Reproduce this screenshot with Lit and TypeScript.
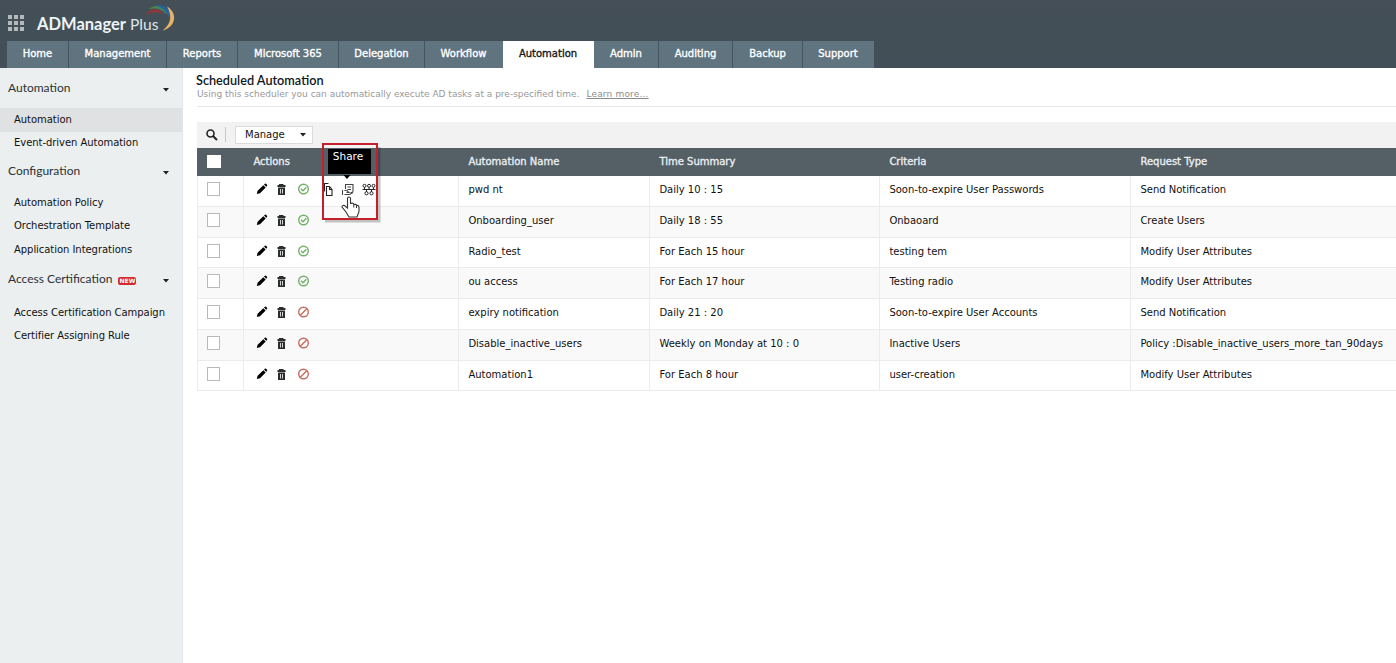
import { LitElement, html, css, svg } from "lit";
import { customElement } from "lit/decorators.js";
import { classMap } from "lit/directives/class-map.js";

const TABS: [string, number][] = [
  ["Home", 62], ["Management", 98], ["Reports", 71], ["Microsoft 365", 101],
  ["Delegation", 86], ["Workflow", 78], ["Automation", 91], ["Admin", 65],
  ["Auditing", 74], ["Backup", 70], ["Support", 71],
];

const ROWS: [boolean, string, string, string, string][] = [
  [true, "pwd nt", "Daily 10 : 15", "Soon-to-expire User Passwords", "Send Notification"],
  [true, "Onboarding_user", "Daily 18 : 55", "Onbaoard", "Create Users"],
  [true, "Radio_test", "For Each 15 hour", "testing tem", "Modify User Attributes"],
  [true, "ou access", "For Each 17 hour", "Testing radio", "Modify User Attributes"],
  [false, "expiry notification", "Daily 21 : 20", "Soon-to-expire User Accounts", "Send Notification"],
  [false, "Disable_inactive_users", "Weekly on Monday at 10 : 0", "Inactive Users", "Policy :Disable_inactive_users_more_tan_90days"],
  [false, "Automation1", "For Each 8 hour", "user-creation", "Modify User Attributes"],
];

const pencil = html`<svg class="i pencil" width="12" height="12" viewBox="0 0 12 12"><path d="M.8 11l.8-3.200L7.300 2.200l2.400 2.400L4 10.300zM8 1.600l.9-.8q.6-.5 1.200 0l.9.900q.5.600 0 1.200l-.8.8z" fill="#000"/></svg>`;
const trash = html`<svg class="i trash" width="9" height="11" viewBox="0 0 9 11"><path d="M2 0h4.500v1h2v2H.5V1H2zM1 3.500h7V11H1z" fill="#2b2d2f"/><path d="M3.500 5v4.500M5.500 5v4.500" stroke="#fff" stroke-width=".8"/></svg>`;
const okIcon = html`<svg class="i" width="12" height="12" viewBox="0 0 12 12" fill="none" stroke="#74b068" stroke-width="1.400"><circle cx="6.500" cy="6" r="4.800"/><path d="M4 5.700l2 2 3.300-3.500"/></svg>`;
const offIcon = html`<svg class="i" width="12" height="12" viewBox="0 0 12 12" fill="none" stroke="#c66d60" stroke-width="1.400"><circle cx="6.500" cy="6" r="4.800"/><path d="M3.300 9.200l6.500-6.500"/></svg>`;
const caret = html`<svg class="caret" width="6" height="4" viewBox="0 0 6 4"><path d="M0 0h6L3 3.500z" fill="#222"/></svg>`;

@customElement("app-header")
export class AppHeader extends LitElement {
  static styles = css`
    :host { display: flex; flex-direction: column; height: 68px; background: linear-gradient(#444f57, #424f58); }
    .brand { height: 41px; display: flex; padding-left: 8px; box-sizing: border-box; }
    .grid { margin: 15px 12px 0 0; flex: none; }
    .logo { font: 400 15.600px/22px Lato, sans-serif; color: #dfe5e9; margin-top: 13px; white-space: nowrap; width: 107px; }
    .logo b { font-size: 16.500px; font-weight: 700; color: #eef3f6; }
    .arc { flex: none; margin-top: 3px; }
    nav { display: flex; height: 27px; margin-left: 7px; }
    .tab { box-sizing: border-box; text-align: center; background: #607480; border-right: 1px solid #46545e; color: #fff; font: 10px/25px "DejaVu Sans", sans-serif; -webkit-text-stroke: .35px currentColor; white-space: nowrap; }
    .tab:last-child, .before { border-right-color: #607480; }
    .tab.on { background: #fff; color: #161616; border-color: #fff; }
  `;
  render() {
    return html`
      <div class="brand">
        <svg class="grid" width="17" height="17" viewBox="0 0 17 17" fill="#b4b9bd">
          ${[0, 6, 12].map((y) => [0, 6, 12].map((x) => svg`<rect x=${x} y=${y} width="4" height="4"/>`))}
        </svg>
        <div class="logo"><b>ADManager</b> Plus</div>
        <svg class="arc" width="32" height="32" viewBox="144 3 32 32">
          <path d="M146 15.500C149 8 158 6.500 164 14.500C158 11.500 151 11.500 146 15.500Z" fill="#943537"/>
          <path d="M149 9C155 4 165 5 167.500 15C161 8.500 156 7.500 149 9Z" fill="#4a8752"/>
          <path d="M156 5.500C166 4 172 10 170.500 20C167 12 163 8 156 5.500Z" fill="#2562a0"/>
          <path d="M167 6.500C178 13 176 27 162.500 30.500C171 24 172.500 16 167 6.500Z" fill="#e9b166"/>
        </svg>
      </div>
      <nav>
        ${TABS.map(([name, w]) => html`<div class=${classMap({ tab: true, on: name === "Automation", before: name === "Workflow" })} style="width:${w}px">${name}</div>`)}
      </nav>`;
  }
}

@customElement("side-menu")
export class SideMenu extends LitElement {
  static styles = css`
    :host { display: block; width: 182px; flex: none; background: #ebeff0; border-right: 1px solid #e2e6e8; font: 10px/24px "DejaVu Sans", sans-serif; color: #111; white-space: nowrap; }
    .head { display: flex; align-items: center; font: 12px/20px Lato, sans-serif; color: #2b3236; padding: 0 13px 0 8px; }
    .head .caret { margin: 4px 0 0 auto; }
    .item { padding-left: 14px; height: 24px; letter-spacing: -.05px; }
    .item.on { background: #dfe1e2; }
    .h1 { margin: 10px 0 10px; }
    .h2 { margin: 6px 0 10px; }
    .h3 { margin: 7px 0 12px; }
    .short { height: 23px; line-height: 23px; }
    .up { line-height: 21px; }
    .new { font: bold 6px/8px "DejaVu Sans", sans-serif; color: #fff; background: #d32a2e; border-radius: 2px; width: 18px; text-align: center; margin: 3px 0 0 6px; }
  `;
  render() {
    return html`
      <div class="head h1">Automation${caret}</div>
      <div class="item on">Automation</div>
      <div class="item short up">Event-driven Automation</div>
      <div class="head h2">Configuration${caret}</div>
      <div class="item short">Automation Policy</div>
      <div class="item">Orchestration Template</div>
      <div class="item">Application Integrations</div>
      <div class="head h3">Access Certification<span class="new">NEW</span>${caret}</div>
      <div class="item">Access Certification Campaign</div>
      <div class="item short up">Certifier Assigning Rule</div>`;
  }
}

@customElement("app-root")
export class AppRoot extends LitElement {
  static styles = css`
    :host { display: flex; flex-direction: column; width: 1396px; height: 663px; overflow: hidden; position: relative; background: #fff; font: 10px/16px "DejaVu Sans", sans-serif; color: #111; }
    .body { display: flex; flex: 1; min-height: 0; }
    main { flex: 1; min-width: 0; padding-left: 14px; white-space: nowrap; }
    h1 { font: 600 12.700px/16px Lato, sans-serif; color: #101820; margin: 4px 0 0 -1px; height: 16px; }
    .sub { color: #999; font-size: 9px; line-height: 12px; height: 18px; border-bottom: 1px solid #e6e6e6; }
    .sub u { margin-left: 4px; color: #8b8b8b; letter-spacing: .18px; }
    .bar { height: 26px; margin-top: 15px; background: #f2f2f3; display: flex; align-items: center; padding: 0 0 1px 9px; box-sizing: border-box; }
    .sep { width: 1px; height: 15px; background: #c5c8ca; margin: 0 9px 0 7px; }
    .manage { box-sizing: border-box; width: 78px; height: 18px; border: 1px solid #d8dcdf; background: #fff; display: flex; align-items: center; padding: 0 6px 0 9px; justify-content: space-between; font-size: 10px; line-height: 18px; }
    .row { display: grid; grid-template-columns: 45px 215px 191px 230px 251px 1fr; box-sizing: border-box; height: 30.800px; border-bottom: 1px solid #ebebeb; border-left: 1px solid #eee; }
    .row:nth-child(odd) { background: #f9f9f9; }
    .row:last-child { height: 30.200px; background: #fff; }
    .row:nth-child(even) { background: #fff; }
    .cell { padding-left: 9.400px; line-height: 28px; border-left: 1px solid #e9edef; }
    .cell:first-child { border: 0; padding-left: 9px; }
    .row.head { height: 28px; background: #555f66; color: #e9eef2; border-color: #555f66; -webkit-text-stroke: .35px currentColor; }
    .head .cell { border-color: transparent; }
    .box { box-sizing: border-box; width: 13px; height: 14px; border: 1px solid #b6babd; background: #fff; margin-top: 6px; }
    .head .box { width: 14px; height: 13px; margin-top: 7px; border-color: #fff; }
    .acts { display: flex; align-items: flex-start; padding: 7px 0 0 9px; }
    .pencil { margin: 0 8px 0 3px; }
    .trash { margin: 1px 11px 0 1px; }
    .i { flex: none; }
    .frame { position: absolute; left: 322px; top: 143px; width: 62px; height: 84px; overflow: visible; }
    .tip { position: absolute; left: 328px; top: 149px; width: 43px; height: 25px; background: #000; color: #fff; text-align: center; line-height: 15px; font-size: 10.500px; text-indent: -3px; }
  `;
  render() {
    return html`
      <app-header></app-header>
      <div class="body">
        <side-menu></side-menu>
        <main>
          <h1>Scheduled Automation</h1>
          <div class="sub">Using this scheduler you can automatically execute AD tasks at a pre-specified time. <u>Learn more...</u></div>
          <div class="bar">
            <svg width="12" height="12" viewBox="0 0 12 12" fill="none" stroke="#222"><circle cx="4.500" cy="4.500" r="3.500" stroke-width="1.600"/><path d="M7 7l4 4" stroke-width="2"/></svg>
            <span class="sep"></span>
            <div class="manage">Manage${caret}</div>
          </div>
          <div>
            <div class="row head">
              <div class="cell"><div class="box"></div></div>
              <div class="cell">Actions</div><div class="cell">Automation Name</div><div class="cell">Time Summary</div><div class="cell">Criteria</div><div class="cell">Request Type</div>
            </div>
            ${ROWS.map(([on, ...texts]) => html`<div class="row">
              <div class="cell"><div class="box"></div></div>
              <div class="cell acts">${pencil}${trash}${on ? okIcon : offIcon}</div>
              ${texts.map((t) => html`<div class="cell">${t}</div>`)}
            </div>`)}
          </div>
        </main>
      </div>
      <div class="tip">Share</div>
      <svg class="frame" viewBox="322 143 62 84" fill="none">
        <path d="M343.500 175h7l-3.500 4z" fill="#000"/>
        <g stroke="#222">
          <path d="M324.500 191.500v-8h4M326.500 186.500h3l2.500 3v6h-5.500zM329.500 186.500v3h2.500" stroke-width="1.100"/>
          <path d="M345.500 189v-4.500h7.500v6.500q0 1.500-1.500 1.500h-1M347.500 187h3.500M347.500 189.500h3.500M342.500 190v5M344.500 190.500h2.500l2 2h-2.500M344.500 194.500h5l3.500-2" stroke="#444" stroke-width="1.100"/>
          <path d="M362.500 189.500h13M369 187.500v2M364.500 187.500v2M373.500 187.500v2M366.500 189.500v2.500M371.500 189.500v2.500"/><circle cx="364.500" cy="185.800" r="1.500"/><circle cx="369" cy="185.800" r="1.500"/><circle cx="373.500" cy="185.800" r="1.500"/><circle cx="366.500" cy="193.300" r="1.600"/><circle cx="371.500" cy="193.300" r="1.600"/>
        </g>
        <path d="M347.500 208V198.500q0-1.500 1.500-1.500t1.500 1.500v5q3-1 3.500 1 2.500-.5 2.500 1 2.500-.5 2.500 2v4l-2 5.500h-8l-3-5-4-5q0-2 2.500-1.500z" fill="#fff" stroke="#333" stroke-width="1.100"/>
        <path d="M353.800 204.500v3M356.500 205.500v2.500" stroke="#333"/>
        <path d="M379 147v74h-54" stroke="#000" stroke-opacity=".22" stroke-width="3"/>
        <rect x="323" y="144" width="54" height="75" stroke="#c4202c" stroke-width="2"/>
      </svg>`;
  }
}
